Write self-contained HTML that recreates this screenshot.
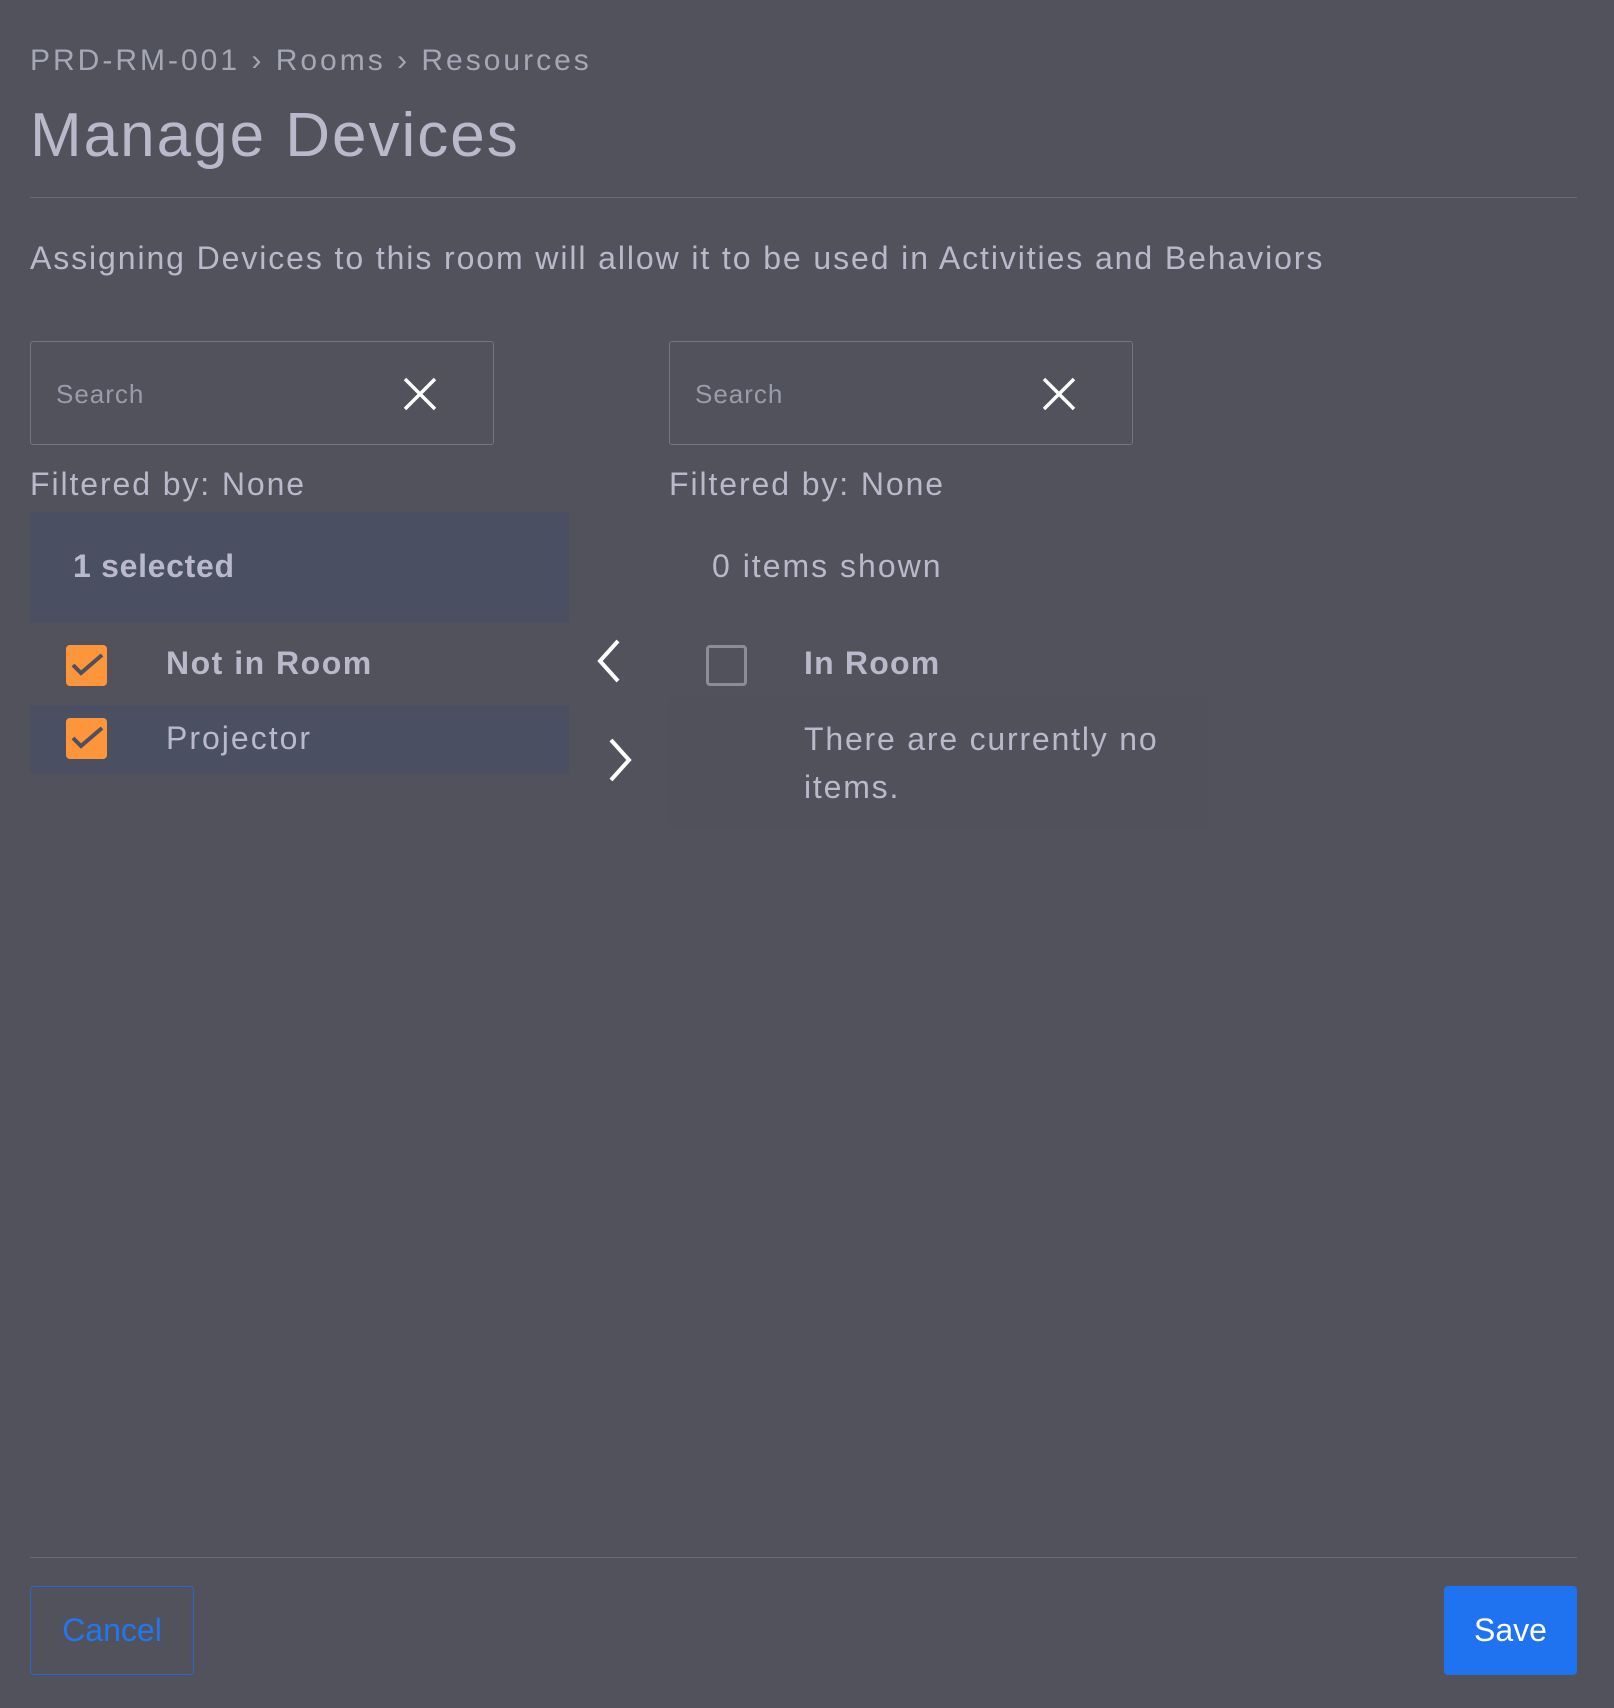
<!DOCTYPE html>
<html><head><style>
*{margin:0;padding:0;box-sizing:border-box}
body{width:1614px;height:1708px;background:#51525b;font-family:"Liberation Sans",sans-serif;color:#b9b9cb;position:relative;overflow:hidden}
.a{position:absolute;white-space:nowrap}
.search{position:absolute;top:341px;width:464px;height:104px;border:1px solid #74757e;border-radius:3px}
.search span{position:absolute;left:25px;top:37px;font-size:26px;color:#9a9bab;letter-spacing:1px}
.search svg{position:absolute;left:372px;top:35px}
.cb{position:absolute;width:41px;height:41px;border-radius:4px;background:#fd963b}
</style></head><body>
<div class="a" style="left:30px;top:44px;font-size:30px;color:#a6a7b6;letter-spacing:3px">PRD-RM-001 › Rooms › Resources</div>
<div class="a" style="left:30px;top:100px;font-size:62px;color:#b9b9cb;letter-spacing:2px">Manage Devices</div>
<div class="a" style="left:30px;top:197px;width:1547px;height:1px;background:#6a6b73"></div>
<div class="a" style="left:30px;top:240px;font-size:32px;letter-spacing:1.9px">Assigning Devices to this room will allow it to be used in Activities and Behaviors</div>

<div class="search" style="left:30px"><span>Search</span><svg width="34" height="34"><path d="M2 2L32 32M32 2L2 32" stroke="#fff" stroke-width="3.5"/></svg></div>
<div class="search" style="left:669px"><span>Search</span><svg width="34" height="34"><path d="M2 2L32 32M32 2L2 32" stroke="#fff" stroke-width="3.5"/></svg></div>

<div class="a" style="left:30px;top:466px;font-size:32px;letter-spacing:1.9px">Filtered by: None</div>
<div class="a" style="left:669px;top:466px;font-size:32px;letter-spacing:1.9px">Filtered by: None</div>

<div class="a" style="left:30px;top:512px;width:539px;height:111px;background:#4a5062"></div>
<div class="a" style="left:73px;top:548px;font-size:32px;font-weight:bold;letter-spacing:0.7px">1 selected</div>
<div class="a" style="left:712px;top:548px;font-size:32px;letter-spacing:2px">0 items shown</div>

<div class="cb" style="left:66px;top:645px"><svg width="41" height="41"><path d="M7 20L15 28L36 10" fill="none" stroke="#4d5060" stroke-width="4"/></svg></div>
<div class="a" style="left:166px;top:645px;font-size:32px;font-weight:bold;letter-spacing:1.5px">Not in Room</div>

<div class="a" style="left:30px;top:705px;width:539px;height:68px;background:#4a5062"></div>
<div class="cb" style="left:66px;top:718px"><svg width="41" height="41"><path d="M7 20L15 28L36 10" fill="none" stroke="#4d5060" stroke-width="4"/></svg></div>
<div class="a" style="left:166px;top:720px;font-size:32px;letter-spacing:2px">Projector</div>

<svg class="a" style="left:590px;top:637px" width="36" height="48"><path d="M28 4L10 24L28 44" fill="none" stroke="#fff" stroke-width="4"/></svg>
<svg class="a" style="left:603px;top:736px" width="36" height="48"><path d="M8 4L26 24L8 44" fill="none" stroke="#fff" stroke-width="4"/></svg>

<div class="a" style="left:706px;top:645px;width:41px;height:41px;border:3px solid #8c8d98;border-radius:4px"></div>
<div class="a" style="left:804px;top:645px;font-size:32px;font-weight:bold;letter-spacing:1.2px">In Room</div>
<div class="a" style="left:669px;top:697px;width:540px;height:130px;background:#50515a"></div>
<div class="a" style="left:804px;top:715px;font-size:32px;line-height:48px;white-space:normal;width:400px;letter-spacing:1.8px">There are currently no items.</div>

<div class="a" style="left:30px;top:1557px;width:1547px;height:1px;background:#6a6b73"></div>
<div class="a" style="left:30px;top:1586px;width:164px;height:89px;border:1px solid #2a67c8;border-radius:4px;color:#2277ee;font-size:32px;text-align:center;line-height:87px">Cancel</div>
<div class="a" style="left:1444px;top:1586px;width:133px;height:89px;background:#1f73f0;border-radius:4px;color:#fff;font-size:32px;text-align:center;line-height:89px">Save</div>
</body></html>
